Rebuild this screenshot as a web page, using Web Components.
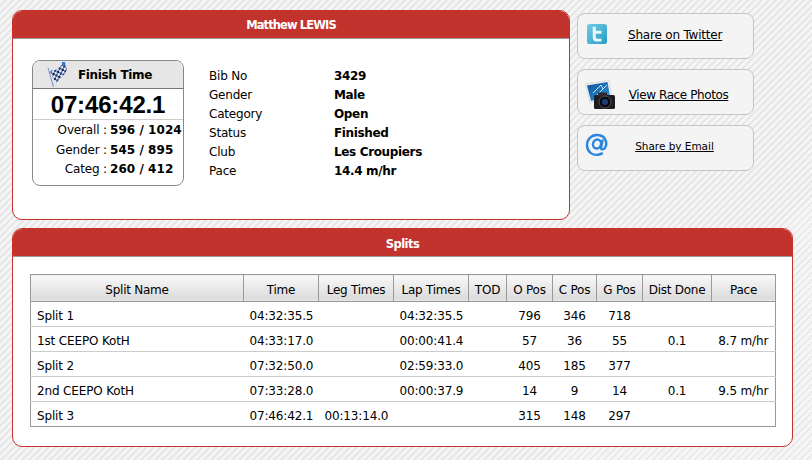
<!DOCTYPE html>
<html><head><meta charset="utf-8">
<style>
html,body{margin:0;padding:0;height:460px;overflow:hidden}
body{font-family:"DejaVu Sans",sans-serif;font-size:12px;color:#000;letter-spacing:-.1px;
background:repeating-linear-gradient(135deg,#f5f5f5 0,#f5f5f5 3.5px,#e7e7e7 3.5px,#e7e7e7 4.95px)}
</style></head><body>
<template id="t-panel"><style>
:host{display:block;box-sizing:border-box;background:#fff;border:1px solid #c8322d;border-radius:10px;overflow:hidden}
.h{height:27px;line-height:var(--title-lh,28px);overflow:hidden;background:#c2332e;border-bottom:1px solid #999;color:#fff;font-weight:bold;text-align:center;font-size:11.5px;letter-spacing:var(--title-ls,-.9px)}
</style><div class="h"><slot name="title"></slot></div><slot></slot></template>

<template id="t-finish"><style>
:host{display:block;box-sizing:border-box;width:152px;height:126px;border:1px solid #888;border-radius:8px;overflow:hidden;background:#fff}
.h{height:28px;box-sizing:border-box;background:#e6e6e6;border-bottom:1px solid #777;display:flex;align-items:center;font-weight:bold;font-size:12px;letter-spacing:-.35px;padding-left:14px}
.h svg{width:20px;height:25px;margin-right:11px;flex:none}
.t{height:31px;box-sizing:border-box;border-bottom:1px solid #ccc;text-align:center;font:bold 24px/31px "Liberation Sans",sans-serif;letter-spacing:-.15px}
.rows{padding-top:1px}
</style><div class="h"><svg viewBox="0 0 20 25"><defs><pattern id="ck" width="5" height="5" patternUnits="userSpaceOnUse" patternTransform="rotate(-25) skewX(-12)"><rect width="5" height="5" fill="#e6eefc"/><rect width="2.500" height="2.500" fill="#1e3f8e"/><rect x="2.500" y="2.500" width="2.500" height="2.500" fill="#14213f"/></pattern></defs><path d="M1 6l5.500 19" stroke="#6f8fc8" stroke-width="1"/><path d="M1 6c3 2.500 5 3 8 1.500 3-2 5-4 9-7l2 7.500c-2 4-7 9-11 13z" fill="url(#ck)"/><rect x="15" y="0" width="3" height="3" fill="#2f74e0"/></svg><slot name="label"></slot></div><div class="t"><slot name="time"></slot></div><div class="rows"><slot></slot></div></template>

<template id="t-rank"><style>
:host{display:flex;height:19.500px;line-height:19.500px}
.l{width:74px;text-align:right;flex:none;letter-spacing:-.15px}
.v{margin-left:3px;white-space:nowrap;font-weight:bold;letter-spacing:.05px}
</style><span class="l"><slot name="label"></slot> :</span><span class="v"><slot></slot></span></template>

<template id="t-info"><style>
:host{display:grid;grid-template-columns:125px auto;grid-auto-rows:19px;line-height:19px;align-content:start;letter-spacing:-.2px}
</style><slot></slot></template>

<template id="t-share"><style>
:host{display:flex;align-items:center;box-sizing:border-box;width:177px;height:46px;background:#f4f4f4;border:1px solid #c4c4c4;border-radius:8px}
.i{flex:none;width:50px;height:44px;display:flex;align-items:center}
.x{flex:1;text-align:center;padding:var(--pt,0) var(--pr,14px) var(--pb,0) 0;text-decoration:underline;white-space:nowrap}
</style><div class="i"><slot name="icon"></slot></div><div class="x"><slot></slot></div></template>

<template id="t-splits"><style>
:host{display:block;margin:17px 17px 18px 17px}
table{border-collapse:collapse;table-layout:fixed;width:745px;font-size:12px;border:1px solid #999}
th{height:23px;padding:3px 0 0;font-weight:normal;background:linear-gradient(#f8f8f8,#dcdcdc 90%,#eee);border-left:1px solid #999;border-bottom:1px solid #999;letter-spacing:-.25px;white-space:nowrap}
td{height:21px;padding:3px 0 0 6px;border-bottom:1px solid #ccc;white-space:nowrap;letter-spacing:-.15px}
tr:last-child td{border-bottom:0}
td.c{text-align:center;padding:3px 0 0}
</style><table><colgroup><col style="width:213px"><col style="width:75px"><col style="width:75px"><col style="width:75px"><col style="width:38px"><col style="width:46px"><col style="width:44px"><col style="width:46px"><col style="width:69px"><col style="width:64px"></colgroup>
<thead><tr><th>Split Name</th><th>Time</th><th>Leg Times</th><th>Lap Times</th><th>TOD</th><th>O Pos</th><th>C Pos</th><th>G Pos</th><th>Dist Done</th><th>Pace</th></tr></thead>
<tbody id="b"></tbody></table></template>

<race-page></race-page>

<script>
function def(n,t,extra){customElements.define(n,class extends HTMLElement{constructor(){super();this.attachShadow({mode:'open'}).appendChild(document.getElementById(t).content.cloneNode(true));}connectedCallback(){extra&&extra(this)}})}
def('race-panel','t-panel');def('finish-card','t-finish');def('rank-row','t-rank');def('info-list','t-info');def('share-button','t-share');
const rows=[["Split 1","04:32:35.5","","04:32:35.5","","796","346","718","",""],["1st CEEPO KotH","04:33:17.0","","00:00:41.4","","57","36","55","0.1","8.7 m/hr"],["Split 2","07:32:50.0","","02:59:33.0","","405","185","377","",""],["2nd CEEPO KotH","07:33:28.0","","00:00:37.9","","14","9","14","0.1","9.5 m/hr"],["Split 3","07:46:42.1","00:13:14.0","","","315","148","297","",""]];
def('splits-table','t-splits',el=>{const b=el.shadowRoot.getElementById('b');b.innerHTML=rows.map(r=>'<tr>'+r.map((c,i)=>`<td${i>=5?' class="c"':''}>${c}</td>`).join('')+'</tr>').join('')});
customElements.define('race-page',class extends HTMLElement{constructor(){super();this.attachShadow({mode:'open'}).innerHTML=`<style>
:host{display:block;padding:10px 0 0 12px;width:800px}
.top{display:flex;gap:7px;height:210px}
.top race-panel{width:558px;height:210px}
.main{display:flex;padding:21px 0 0 19px}
info-list{margin:7px 0 0 25px}
.side{display:flex;flex-direction:column;padding-top:3px;gap:10px}
.bottom{width:781px;height:219px;margin-top:8px;--title-lh:30px;--title-ls:-.5px}
b{font-weight:bold;letter-spacing:-.35px}
svg{display:block}
</style>
<div class="top"><race-panel><span slot="title">Matthew LEWIS</span>
<div class="main"><finish-card><span slot="label">Finish Time</span><span slot="time">07:46:42.1</span>
<rank-row><span slot="label">Overall</span>596 / 1024</rank-row><rank-row><span slot="label">Gender</span>545 / 895</rank-row><rank-row><span slot="label">Categ</span>260 / 412</rank-row></finish-card>
<info-list><span>Bib No</span><b>3429</b><span>Gender</span><b>Male</b><span>Category</span><b>Open</b><span>Status</span><b>Finished</b><span>Club</span><b>Les Croupiers</b><span>Pace</span><b>14.4 m/hr</b></info-list></div></race-panel>
<div class="side">
<share-button style="--pr:34px;--pb:2px;letter-spacing:-.2px"><svg slot="icon" style="margin:-5px 0 0 9px" width="20" height="20" viewBox="0 0 21 21"><defs><linearGradient id="tw" x1="0" y1="0" x2="1" y2="1"><stop offset="0" stop-color="#6fcbe6"/><stop offset="1" stop-color="#2a9cc4"/></linearGradient></defs><rect width="21" height="21" rx="3" fill="url(#tw)"/><path d="M6 3h3.200v4.200h6v3h-6v3.200c0 1.400.8 2 2 2h4v3h-5c-2.800 0-4.200-1.600-4.200-4.200z" fill="#eaf8fc"/></svg>Share on Twitter</share-button>
<share-button style="--pr:24px;--pt:6px;letter-spacing:-.4px"><svg slot="icon" style="margin:5px 0 0 7px" width="31" height="30" viewBox="0 0 31 30"><defs><linearGradient id="ph" x1="0" y1="0" x2="1" y2="1"><stop offset="0" stop-color="#0d4f96"/><stop offset="1" stop-color="#2f9bdc"/></linearGradient></defs><path d="M0 4L24 0l3 17-22 6z" fill="#eee" stroke="#ccc" stroke-width=".5"/><path d="M2 5.500L22.500 2l2.500 14-19 5z" fill="url(#ph)"/><path d="M8 13l8-8 2 4 4-4M12 15l6-6" stroke="#bfe3f7" stroke-width="1" fill="none"/><rect x="9" y="15" width="21" height="14" rx="1.500" fill="#1c1c22"/><rect x="13" y="12.500" width="9" height="4" fill="#2a2a30"/><circle cx="20" cy="22" r="6" fill="#0a0a12" stroke="#555" stroke-width="1"/><circle cx="20" cy="22" r="3" fill="#1d3f78"/></svg>View Race Photos</share-button>
<share-button style="font-size:10.500px;--pr:32px;--pb:4px;letter-spacing:-.03px"><svg slot="icon" style="margin-left:7px;margin-top:-7px" width="24" height="24" viewBox="0 0 24 24" fill="none"><path d="M17.500 7.500l-1.500 7.500c-.3 1.800 2.800 1.900 4.200-.4 2.400-4.200.8-12.100-7.500-12.600C6 1.600 1.800 7 2 12.600c.2 6.200 5.800 10 11 9.200 1.600-.2 3-.8 4-1.400" stroke="#2b86dc" stroke-width="2.400" stroke-linecap="round"/><ellipse cx="12" cy="11" rx="4" ry="4.500" stroke="#2b86dc" stroke-width="2.400" transform="rotate(15 12 11)"/></svg>Share by Email</share-button>
</div></div>
<race-panel class="bottom"><span slot="title">Splits</span><splits-table></splits-table></race-panel>`}});
</script></body></html>
